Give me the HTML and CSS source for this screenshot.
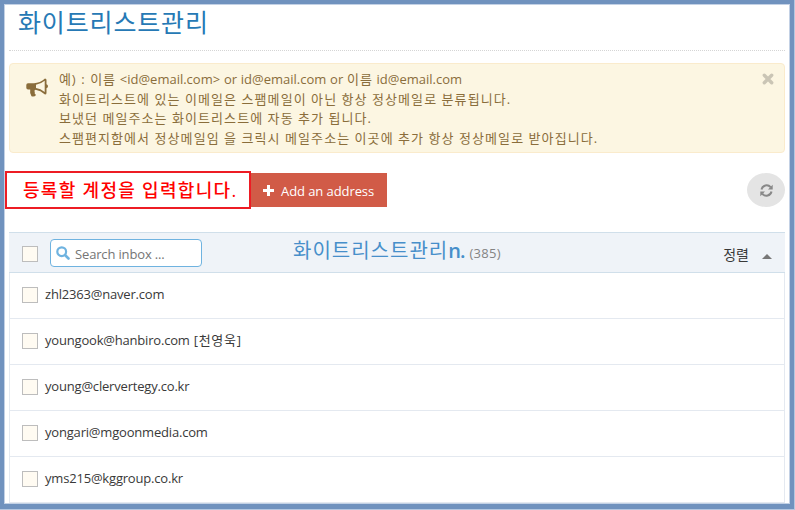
FILE: index.html
```html
<!DOCTYPE html>
<html lang="ko">
<head>
<meta charset="utf-8">
<title>화이트리스트관리</title>
<link rel="stylesheet" href="styles.css">
</head>
<body>
<div class="frame">
<main class="page">
  <h1 class="title"><span>화이트리스트관리</span></h1>
  <section class="notice">
    <svg class="horn" width="22" height="20" viewBox="0 0 22 20"><path fill="currentColor" fill-rule="evenodd" d="M19 0.500Q20.500 0.500 20.500 2V6.300Q22 7 22 8.200Q22 9.500 20.500 10.200V15Q20.500 16.500 19 16.500Q14.500 12.500 9.500 11.700Q7.500 12.500 8.800 14Q8 15.300 10 17Q8.500 19.300 5.500 18.300Q3.500 14.500 4.200 11.500H2Q.3 11.500 .3 9.800V7Q.3 5.200 2 5.200H8Q14 5 19 .5ZM18.700 2.800Q14.500 6.200 10 6.800V10Q14.500 10.700 18.700 14Z"/></svg>
    <div class="notice-text">
      <p class="sample"><span class="ko">예) : 이름</span> &lt;id@email.com&gt; or id@email.com or <span class="ko">이름</span> id@email.com</p>
      <p>화이트리스트에 있는 이메일은 스팸메일이 아닌 항상 정상메일로 분류됩니다.</p>
      <p>보냈던 메일주소는 화이트리스트에 자동 추가 됩니다.</p>
      <p>스팸편지함에서 정상메일임 을 크릭시 메일주소는 이곳에 추가 항상 정상메일로 받아집니다.</p>
    </div>
    <svg class="close" width="12" height="12" viewBox="0 0 12 12"><path d="M2.300 2.300L9.700 9.700M9.700 2.300L2.300 9.700" stroke="currentColor" stroke-width="3.400" stroke-linecap="round"/></svg>
  </section>
  <div class="toolbar">
    <div class="callout"><span>등록할 계정을 입력합니다.</span></div>
    <button class="add"><svg width="11" height="11" viewBox="0 0 11 11"><path d="M5.500 0V11M0 5.500H11" stroke="#fff" stroke-width="3"/></svg><span>Add an address</span></button>
    <button class="refresh"><svg width="13" height="13" viewBox="0 0 13 13"><path d="M1.500 5.500A5.200 5.200 0 0 1 10.600 3.200M11.500 7.500A5.200 5.200 0 0 1 2.400 9.800" fill="none" stroke="currentColor" stroke-width="2"/><path d="M12.700 .7V5.500H8ZM.3 12.300V7.500H5Z" fill="currentColor"/></svg></button>
  </div>
  <section class="list">
    <header class="head">
      <i class="box"></i>
      <div class="search"><svg width="14" height="14" viewBox="0 0 14 14"><circle cx="5.700" cy="5.700" r="4.400" fill="none" stroke="currentColor" stroke-width="2.200"/><path d="M9 9L12.500 12.500" stroke="currentColor" stroke-width="2.600" stroke-linecap="round"/></svg><span>Search inbox ...</span></div>
      <h2 class="heading"><span class="name">화이트리스트관리</span><span class="n">n.</span><span class="count">(385)</span></h2>
      <span class="sort">정렬</span>
      <i class="caret"></i>
    </header>
    <div class="row"><i class="box"></i><span>zhl2363@naver.com</span></div>
    <div class="row"><i class="box"></i><span>youngook@hanbiro.com</span><span class="who">[천영욱]</span></div>
    <div class="row"><i class="box"></i><span>young@clervertegy.co.kr</span></div>
    <div class="row"><i class="box"></i><span>yongari@mgoonmedia.com</span></div>
    <div class="row"><i class="box"></i><span>yms215@kggroup.co.kr</span></div>
  </section>
</main>
</div>
</body>
</html>
```
FILE: styles.css
```css
* { box-sizing: border-box; }
body { margin: 0; background: #fff; font: 13px/20px "Open Sans", "Noto Sans CJK KR", sans-serif; color: #393939; }
h1, h2, p { margin: 0; font-weight: 400; }
svg, .box { flex: none; display: block; }
span, p { white-space: nowrap; }
.frame { width: 795px; height: 510px; overflow: hidden; border: 1px solid #b5c7e0; border-width: 0 1px 1px 0; }
.page { height: 509px; border: 4px solid #7092be; border-bottom-width: 5px; box-shadow: inset 0 0 0 1px #c3d1e5; padding: 0 5px; overflow: hidden; }
.title { height: 47px; border-bottom: 1px dotted #d5d5d5; padding: 1px 0 0 9px; color: #2679b5; font-size: 25px; line-height: 34px; letter-spacing: .85px; }
.notice { height: 90px; margin-top: 12px; border: 1px solid #faebcc; border-radius: 4px; background: #fcf6e2; color: #8a6d3b; display: flex; padding: 6px 10px 0 16px; }
.horn { margin-top: 8px; }
.notice-text { margin-left: 11px; flex: 1; }
.notice-text p { line-height: 19.500px; height: 19.500px; letter-spacing: 1.06px; }
.notice-text .sample { letter-spacing: 0; word-spacing: .4px; }
.sample .ko { letter-spacing: .9px; }
.close { color: #cac5b5; margin-top: 3px; }
.toolbar { height: 38px; margin: 18px 0 0 -4px; display: flex; align-items: center; }
.callout { width: 246px; height: 38px; border: 2px solid #ed1c24; color: #f00; font-size: 18px; font-weight: 500; line-height: 34px; padding-left: 16px; letter-spacing: 1.3px; }
button { border: 0; padding: 0; font: inherit; display: flex; align-items: center; }
.add { width: 136px; height: 34px; background: #d15b47; color: #fff; padding: 1px 0 0 12px; gap: 7px; letter-spacing: -.08px; }
.refresh { width: 38px; height: 34px; border-radius: 50%; background: #e4e4e4; color: #888; justify-content: center; margin-left: auto; padding-top: 1px; }
.list { margin-top: 23px; border: 1px solid #e4e9f0; border-width: 0 1px; }
.head { height: 41px; margin: 0 -1px; background: #eff3f8; border: 1px solid #d0dfea; border-width: 1px 0; display: flex; align-items: center; padding: 3px 13px 0 13px; }
.box { width: 16px; height: 16px; border: 1px solid #bdbdbd; background: #fffbf2; }
.search { width: 152px; height: 28px; margin: -2px 0 0 12px; border: 1px solid #6fb3e0; border-radius: 4px; background: #fff; color: #6fb3e0; display: flex; align-items: center; padding-left: 5px; }
.search span { color: #757575; margin: 2px 0 0 5px; letter-spacing: -.15px; }
.search svg { margin-bottom: 1px; }
.heading { display: flex; align-items: baseline; margin: -4px 0 0 91px; color: #478fca; }
.name, .n { font-size: 20px; }
.name { letter-spacing: 1px; }
.n { font-weight: 600; letter-spacing: -1px; }
.count { font-size: 13px; color: #848484; margin-left: 5px; letter-spacing: .3px; }
.sort { margin: 2px 0 0 auto; font-size: 14px; }
.caret { border: 5px solid transparent; border-top: 0; border-bottom: 5px solid #777; margin: 5px 0 0 13px; }
.row { height: 46px; border-bottom: 1px solid #e4e9f0; display: flex; align-items: center; padding: 0 0 1px 12px; letter-spacing: -.19px; }
.row .box { margin-right: 7px; }
.row span { margin-top: -2px; }
.row .who { margin-left: 4px; letter-spacing: .7px; }
```
